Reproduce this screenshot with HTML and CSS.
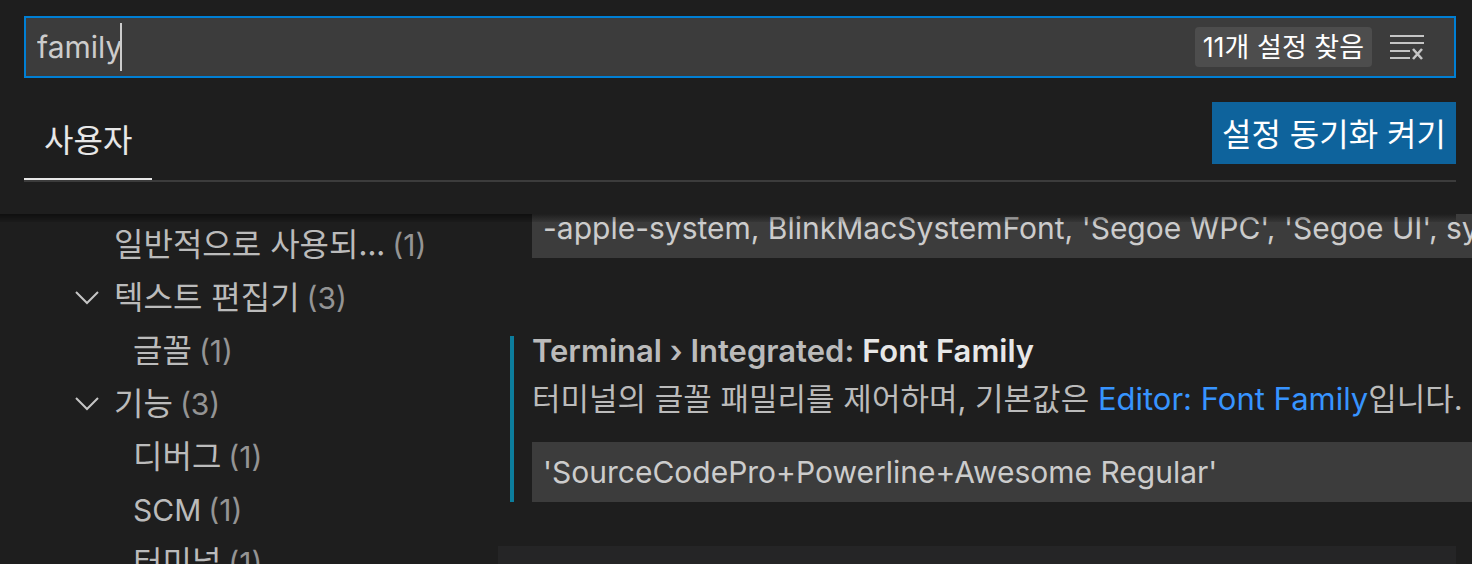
FILE: index.html
```html
<!DOCTYPE html>
<html lang="ko">
<head>
<meta charset="utf-8">
<title>설정</title>
<link rel="stylesheet" href="styles.css">
</head>
<body>
<div class="editor">
  <header class="header">
    <div class="search">
      <label class="search-label">
        <input class="search-input" type="text" value="family" aria-label="설정 검색">
        <span class="caret"></span>
      </label>
      <span class="count">11개 설정 찾음</span>
      <button class="clear" type="button" aria-label="설정 검색 결과 지우기">
        <svg viewBox="0 0 34 26" width="34" height="26" fill="none" stroke="#c5c5c5" stroke-width="2">
          <path d="M0 2h34M0 9h34M0 17h20M0 24h20"/>
          <path d="M23 15l9 10M32 15l-9 10" stroke-width="2.6"/>
        </svg>
      </button>
    </div>
    <div class="tabs">
      <button class="tab" type="button">사용자</button>
      <button class="sync" type="button">설정 동기화 켜기</button>
    </div>
  </header>
  <div class="body">
    <nav class="toc">
      <ul class="tree">
        <li class="row"><span class="twistie"></span><span class="name">일반적으로 사용되...</span><span class="num">(1)</span></li>
        <li class="row"><span class="twistie"><svg viewBox="0 0 24 14" width="24" height="14" fill="none" stroke="#c5c5c5" stroke-width="2"><path d="M1 1l11 11L23 1"/></svg></span><span class="name">텍스트 편집기</span><span class="num">(3)</span></li>
        <li class="row child"><span class="name">글꼴</span><span class="num">(1)</span></li>
        <li class="row"><span class="twistie"><svg viewBox="0 0 24 14" width="24" height="14" fill="none" stroke="#c5c5c5" stroke-width="2"><path d="M1 1l11 11L23 1"/></svg></span><span class="name">기능</span><span class="num">(3)</span></li>
        <li class="row child"><span class="name">디버그</span><span class="num">(1)</span></li>
        <li class="row child"><span class="name"><span class="latin">SCM</span></span><span class="num">(1)</span></li>
        <li class="row child"><span class="name">터미널</span><span class="num">(1)</span></li>
      </ul>
    </nav>
    <main class="settings">
      <div class="previous">
        <input class="field" type="text" aria-label="Font Family" value="-apple-system, BlinkMacSystemFont, 'Segoe WPC', 'Segoe UI', system-ui, 'Ubuntu', 'Droid Sans', sans-serif">
      </div>
      <section class="setting">
        <h2 class="title"><span class="category">Terminal › Integrated: </span>Font Family</h2>
        <p class="description">터미널의 글꼴 패밀리를 제어하며, 기본값은 <a class="link" href="#editor-font">Editor: Font Family</a>입니다.</p>
        <input class="field" type="text" aria-label="Terminal Integrated Font Family" value="'SourceCodePro+Powerline+Awesome Regular'">
      </section>
      <div class="next"></div>
    </main>
  </div>
</div>
</body>
</html>
```

FILE: styles.css
```css
* {
  box-sizing: border-box;
}

body {
  margin: 0;
  background: #1e1e1e;
  color: #cccccc;
  font-family: Inter, "Noto Sans CJK KR", sans-serif;
  font-size: 30px;
}

button,
input {
  font: inherit;
  border: 0;
  border-radius: 0;
  margin: 0;
  outline: 0;
}

.editor {
  display: flex;
  flex-direction: column;
  height: 100vh;
  overflow: hidden;
}

.header {
  flex: none;
  padding: 16px 16px 32px 24px;
}

.search {
  display: flex;
  align-items: center;
  height: 62px;
  padding: 0 30px 0 11px;
  background: #3c3c3c;
  border: 2px solid #007fd4;
}

.search-label {
  display: flex;
  align-items: center;
  flex: 1;
}

.search-input {
  field-sizing: content;
  padding: 0;
  background: transparent;
  color: #cccccc;
}

.caret {
  width: 2px;
  height: 48px;
  margin-left: -2px;
  background: #cccccc;
}

.count {
  height: 40px;
  padding: 0 8px;
  border-radius: 4px;
  background: #4d4d4d;
  color: #ffffff;
  font-size: 27px;
  line-height: 42px;
}

.clear {
  display: flex;
  margin-left: 18px;
  padding: 0;
  background: transparent;
}

.tabs {
  display: flex;
  align-items: flex-start;
  justify-content: space-between;
  height: 104px;
  padding-top: 24px;
  border-bottom: 2px solid #3c3c3c;
}

.tab,
.sync,
.name {
  font-family: "Noto Sans CJK KR", sans-serif;
  font-size: 32px;
}

.tab {
  height: 78px;
  padding: 0 20px 4px;
  background: transparent;
  border-bottom: 2px solid #e7e7e7;
  color: #e7e7e7;
}

.sync {
  height: 62px;
  padding: 0 10px 2px;
  background: #0e639c;
  color: #ffffff;
}

.body {
  position: relative;
  display: flex;
  flex: 1;
  min-height: 0;
  overflow: hidden;
}

.body::before {
  content: "";
  position: absolute;
  z-index: 1;
  top: 0;
  left: 0;
  right: 16px;
  height: 8px;
  background: linear-gradient(rgba(0, 0, 0, 0.5), rgba(0, 0, 0, 0.1));
}

.toc {
  flex: none;
  width: 498px;
}

.tree {
  margin: 0;
  padding: 4px 0 0 75px;
  list-style: none;
}

.row {
  display: flex;
  align-items: baseline;
  gap: 7px;
  height: 53px;
  line-height: 48px;
  color: #bbbbbb;
  white-space: nowrap;
}

.child {
  padding-left: 58px;
}

.twistie {
  display: flex;
  align-self: center;
  width: 32px;
}

.num {
  color: #949494;
}

.latin {
  font-family: Inter, sans-serif;
  font-size: 30px;
}

.settings {
  flex: 1;
  min-width: 0;
  margin-top: -16px;
}

.field {
  display: block;
  width: 100%;
  height: 60px;
  padding: 0 0 0 11px;
  background: #3c3c3c;
  color: #cccccc;
}

.previous {
  padding-left: 34px;
}

.setting {
  margin: 78px 0 44px 12px;
  padding-left: 18px;
  border-left: 4px solid #0c7d9d;
}

.title {
  margin: 0;
  font-size: 31px;
  font-weight: 600;
  line-height: 30px;
  color: #e7e7e7;
}

.category {
  color: #bbbbbb;
}

.description {
  margin: 9px 0 19px;
  font-size: 31px;
  line-height: 48px;
  color: #bbbbbb;
  white-space: nowrap;
}

.link {
  color: #3794ff;
  text-decoration: none;
}

.next {
  height: 60px;
  margin-right: 16px;
  background: #252526;
}
```
